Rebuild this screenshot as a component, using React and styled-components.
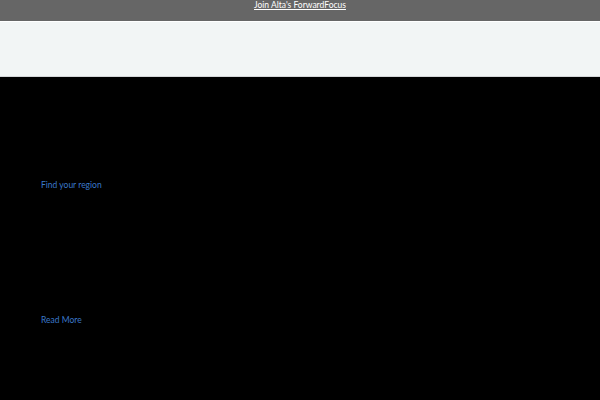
import React from "react";
import styled, { createGlobalStyle } from "styled-components";

const Global = createGlobalStyle`
  html, body { margin: 0; padding: 0; background: #000; }
  body { font-family: "Lato", "Liberation Sans", sans-serif; }
  * { box-sizing: border-box; }
`;

const Page = styled.div`
  width: 600px;
  height: 400px;
  overflow: hidden;
  background: #000;
`;

const Banner = styled.div`
  height: 21px;
  background: #666666;
  display: flex;
  justify-content: center;
  align-items: flex-start;
  padding-top: 0px;
`;

const BannerLink = styled.a`
  color: #ffffff;
  font-family: "Lato", "Liberation Sans", sans-serif;
  font-size: 8.5px;
  line-height: 11px;
  text-decoration: underline;
`;

const Header = styled.header`
  height: 56px;
  background: #f2f5f5;
  border-top: 1px solid #ffffff;
  border-bottom: 1px solid #d4d6d8;
`;

const Main = styled.main`
  padding: 0 41px;
  display: flex;
  flex-direction: column;
`;

const Section = styled.section`
  padding-top: ${(p) => p.$top}px;
`;

const MoreLink = styled.a`
  color: #3a78c9;
  font-family: "Lato", "Liberation Sans", sans-serif;
  font-size: 8.5px;
  line-height: 12px;
  text-decoration: none;
  display: inline-block;
`;

export default function App() {
  return (
    <Page>
      <Global />
      <Banner>
        <BannerLink href="#">Join Alta's ForwardFocus</BannerLink>
      </Banner>
      <Header />
      <Main>
        <Section $top={95}>
          <MoreLink href="#">Find your region</MoreLink>
        </Section>
        <Section $top={116}>
          <MoreLink href="#">Read More</MoreLink>
        </Section>
      </Main>
    </Page>
  );
}
